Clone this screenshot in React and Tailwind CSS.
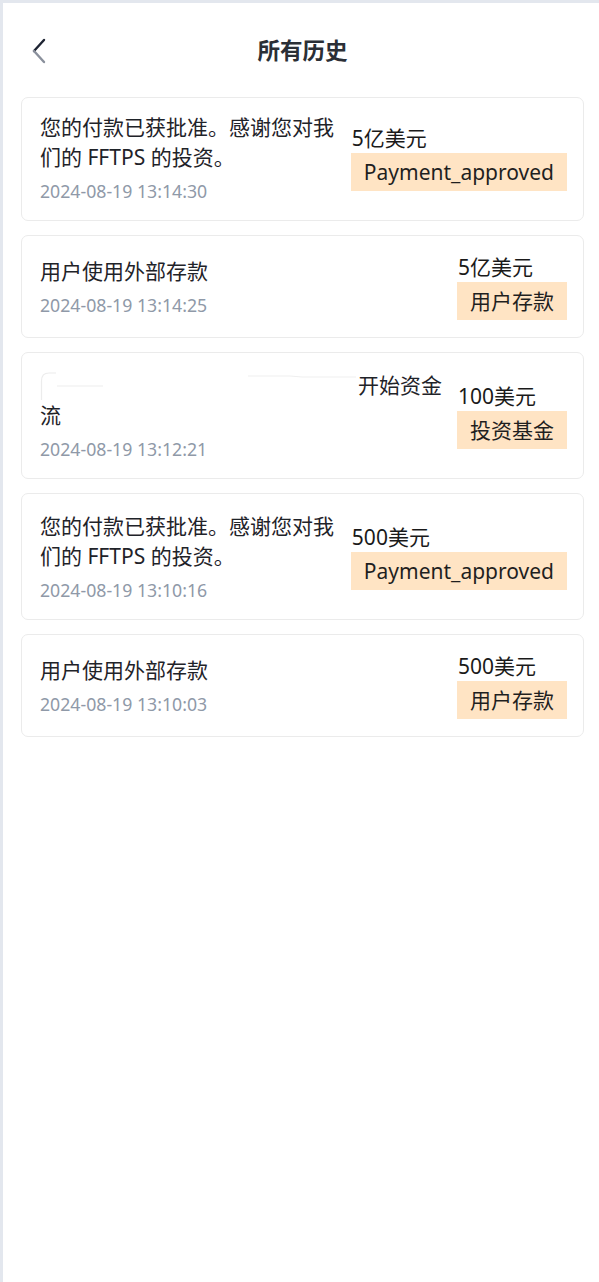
import React from "react";

const FONT = { fontFamily: '"Segoe UI", "Noto Sans", "Noto Sans CJK SC", sans-serif' };

function Blot() {
  return (
    <span className="inline-block align-top w-[318px] h-[30px]">
      <svg width="318" height="30" viewBox="0 0 318 30" fill="none">
        <path d="M1.5 30 V11 Q1.5 3 9 3 H16" stroke="#ececec" strokeWidth="1.2" />
        <path d="M17 16 H63" stroke="#eeeeee" strokeWidth="1.2" />
        <path d="M208 6 H250 L262 7 H316" stroke="#efefef" strokeWidth="1.2" />
      </svg>
    </span>
  );
}

const items = [
  {
    first: true,
    text: "您的付款已获批准。感谢您对我们的 FFTPS 的投资。",
    date: "2024-08-19 13:14:30",
    amount: "5亿美元",
    tag: "Payment_approved",
  },
  {
    text: "用户使用外部存款",
    date: "2024-08-19 13:14:25",
    amount: "5亿美元",
    tag: "用户存款",
  },
  {
    blot: true,
    text: "开始资金流",
    date: "2024-08-19 13:12:21",
    amount: "100美元",
    tag: "投资基金",
  },
  {
    text: "您的付款已获批准。感谢您对我们的 FFTPS 的投资。",
    date: "2024-08-19 13:10:16",
    amount: "500美元",
    tag: "Payment_approved",
  },
  {
    text: "用户使用外部存款",
    date: "2024-08-19 13:10:03",
    amount: "500美元",
    tag: "用户存款",
  },
];

function Card({ it }) {
  return (
    <div
      className={
        "border border-[#ebebeb] rounded-[7px] bg-white pl-[18px] pr-[16px] pb-[17px] flex items-center justify-between gap-[8px] " +
        (it.first ? "pt-[14px]" : "pt-[17px]")
      }
    >
      <div className="min-w-0 flex-1">
        <div className="text-[21px] leading-[30px] text-[#1f2329]">
          {it.blot && <Blot />}
          {it.text}
        </div>
        <div className="mt-[7px] text-[17.7px] leading-[24px] text-[#8f99a8]">{it.date}</div>
      </div>
      <div className="flex flex-col items-start shrink-0">
        <div className="text-[21px] leading-[29px] text-[#1a1a1a] pl-[1px]">{it.amount}</div>
        <div className="bg-[#ffe4c4] text-[21px] leading-[26px] text-[#1f1f1f] px-[13px] py-[6px]">{it.tag}</div>
      </div>
    </div>
  );
}

export default function App() {
  return (
    <div className="min-h-[1282px] bg-[#e3e7ee] pt-[3px] pl-[3px]" style={FONT}>
      <div className="bg-white min-h-[1279px]">
        <div className="relative h-[94px] flex items-center justify-center">
          <svg className="absolute left-[27px] top-[34px]" width="20" height="28" viewBox="0 0 20 28" fill="none">
            <path d="M14 3 L4 14" stroke="#1e2433" strokeWidth="2.4" strokeLinecap="round" />
            <path d="M4 14 L14 25" stroke="#8a909c" strokeWidth="2.4" strokeLinecap="round" />
          </svg>
          <div className="text-[22.5px] font-bold text-[#2b2f36] leading-[30px] ml-[3px] mt-[2px]">所有历史</div>
        </div>
        <div className="pl-[18px] pr-[15px] flex flex-col gap-[14px]">
          {items.map((it, i) => (
            <Card key={i} it={it} />
          ))}
        </div>
      </div>
    </div>
  );
}
